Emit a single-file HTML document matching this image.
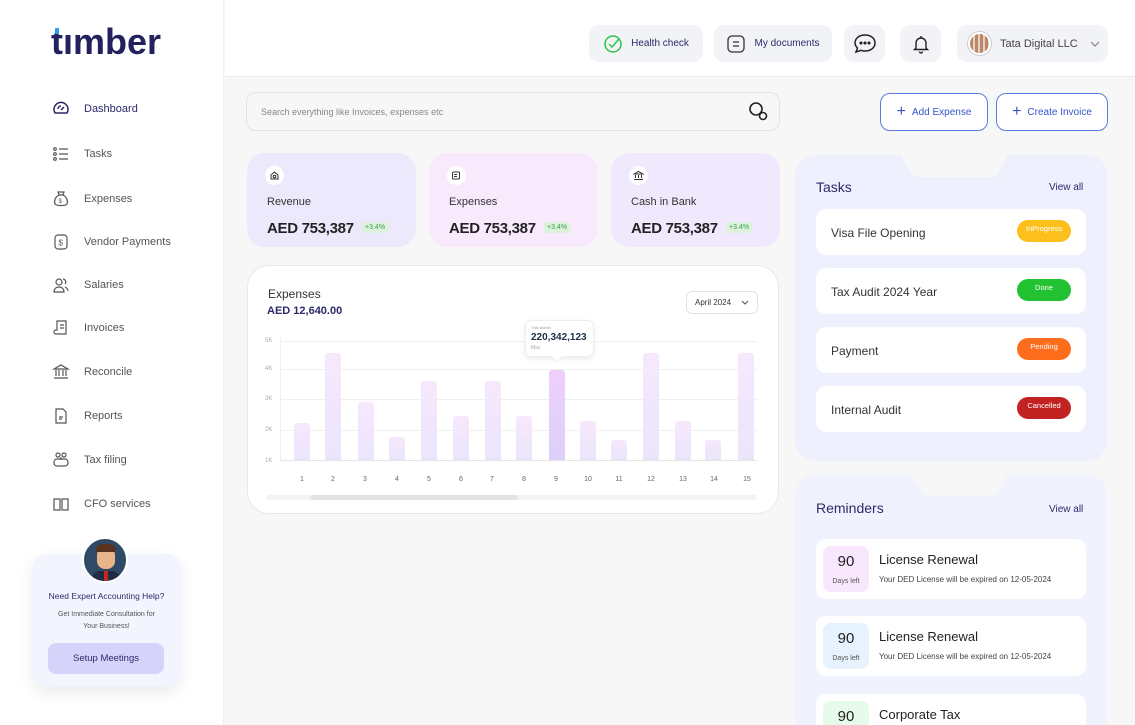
<!DOCTYPE html>
<html><head><meta charset="utf-8">
<style>
*{margin:0;padding:0;box-sizing:border-box}
html{width:1135px;height:725px;overflow:hidden}
body{width:1135px;height:725px;overflow:hidden;background:#f7f7f7;font-family:"Liberation Sans",sans-serif;position:relative;color:#222}
.abs{position:absolute}
.side{left:0;top:0;width:224px;height:725px;background:#fff;border-right:1px solid #eee}
.hdr{left:225px;top:0;width:910px;height:77px;background:#fff;border-bottom:1px solid #ececec}
.nav{position:absolute;left:52px;font-size:11px;color:#555;display:flex;align-items:center}
.nav svg{width:18px;height:18px;margin-right:14px}
.pill{position:absolute;top:25px;height:37px;background:#f2f3f7;border-radius:10px;display:flex;align-items:center;justify-content:center;font-size:10px;color:#2c2a6b}
.btn{position:absolute;top:93px;height:38px;border:1px solid #5b7be0;border-radius:10px;background:#fff;color:#3355cc;font-size:10px;display:flex;align-items:center;justify-content:center}
.card{position:absolute;top:153px;width:169px;height:94px;border-radius:18px}
.card .ic{position:absolute;left:18px;top:13px;width:19px;height:19px;border-radius:50%;background:#fff;display:flex;align-items:center;justify-content:center}
.card .t{position:absolute;left:20px;top:43px;font-size:11px;color:#333}
.card .v{position:absolute;left:20px;top:67px;font-size:15px;font-weight:bold;color:#222;letter-spacing:-0.3px}
.card .b{position:absolute;left:115px;top:69px;font-size:7px;color:#3a9a4a;background:#dcf2dc;padding:2px 3px;border-radius:2px}
.task{position:absolute;left:816px;width:270px;height:46px;background:#fff;border-radius:10px;font-size:12px;color:#333}
.task span{position:absolute;left:15px;top:17px}
.task i{position:absolute;right:15px;top:11px;width:54px;height:22px;border-radius:11px;color:#fff;font-style:normal;font-size:7.5px;text-align:center;line-height:18px}
.rem{position:absolute;left:816px;width:270px;height:60px;background:#fff;border-radius:10px}
.rem .d{position:absolute;left:7px;top:7px;width:46px;height:46px;border-radius:8px;text-align:center}
.rem .d b{display:block;font-size:15px;font-weight:normal;color:#222;margin-top:7px}
.rem .d small{font-size:7px;color:#555}
.rem .h{position:absolute;left:63px;top:13px;font-size:13px;color:#222}
.rem .s{position:absolute;left:63px;top:36px;font-size:8px;color:#444}
.bar{position:absolute;width:16px;border-radius:3px 3px 0 0;background:linear-gradient(#f6e8fd,#ebe5fb)}
.xl{position:absolute;top:476px;font-size:7px;color:#666;width:16px;text-align:center}
.yl{position:absolute;left:265px;font-size:6px;color:#aaa}
.gl{position:absolute;left:280px;width:477px;height:1px;background:#f0f0f0}
</style></head><body>
<div class="abs side"></div>
<div class="abs hdr"></div>
<div class="abs" style="left:51px;top:21px;font-size:36px;font-weight:bold;color:#23215e;letter-spacing:0px">tımber</div>
<div class="abs" style="left:55px;top:28px;width:4px;height:6px;background:#2a9bf0;border-radius:1px"></div>

<div class="nav" style="top:100px;color:#2c2a6b"><svg viewBox="0 0 18 18" fill="none" stroke="#2c2a6b" stroke-width="1.5"><path d="M3 13a7 7 0 1 1 12 0z"/><path d="M9 10l3-3M6 9a3 3 0 0 1 3-3"/></svg>Dashboard</div>
<div class="nav" style="top:145px"><svg viewBox="0 0 18 18" fill="none" stroke="#555" stroke-width="1.2"><circle cx="3" cy="4" r="1.3"/><circle cx="3" cy="9" r="1.3"/><circle cx="3" cy="14" r="1.3"/><path d="M7 4h9M7 9h9M7 14h9"/></svg>Tasks</div>
<div class="nav" style="top:190px"><svg viewBox="0 0 18 18" fill="none" stroke="#555" stroke-width="1.2"><path d="M6 2h6l-1 3H7zM7 5C3 7 2 11 3 14c1 2 11 2 12 0 1-3 0-7-4-9"/><text x="6.5" y="13" font-size="6" fill="#555" stroke="none">$</text></svg>Expenses</div>
<div class="nav" style="top:233px"><svg viewBox="0 0 18 18" fill="none" stroke="#555" stroke-width="1.2"><rect x="3" y="2" width="12" height="14" rx="3"/><text x="6.5" y="12.5" font-size="8" fill="#555" stroke="none">$</text></svg>Vendor Payments</div>
<div class="nav" style="top:276px"><svg viewBox="0 0 18 18" fill="none" stroke="#555" stroke-width="1.2"><circle cx="7" cy="6" r="3"/><path d="M2 16c0-3 2-5 5-5s5 2 5 5zM11 3a3 3 0 0 1 2 5M13 11c2 1 3 2 3 4"/></svg>Salaries</div>
<div class="nav" style="top:319px"><svg viewBox="0 0 18 18" fill="none" stroke="#555" stroke-width="1.2"><path d="M5 2h9v13H4a2 2 0 0 1 0-4h1z"/><path d="M8 6h4M8 9h4"/></svg>Invoices</div>
<div class="nav" style="top:363px"><svg viewBox="0 0 18 18" fill="none" stroke="#555" stroke-width="1.2"><path d="M2 6l7-4 7 4zM4 7v6M7 7v6M11 7v6M14 7v6M2 15h14"/></svg>Reconcile</div>
<div class="nav" style="top:407px"><svg viewBox="0 0 18 18" fill="none" stroke="#555" stroke-width="1.2"><path d="M4 2h7l3 3v11H4z"/><path d="M7 10h4M7 12h3"/></svg>Reports</div>
<div class="nav" style="top:451px"><svg viewBox="0 0 18 18" fill="none" stroke="#555" stroke-width="1.2"><rect x="2" y="8" width="14" height="7" rx="3"/><circle cx="6" cy="4" r="2"/><circle cx="12" cy="4" r="2"/><path d="M9 6v3"/></svg>Tax filing</div>
<div class="nav" style="top:495px"><svg viewBox="0 0 18 18" fill="none" stroke="#555" stroke-width="1.2"><path d="M2 4h6v11H2zM10 4h6v11h-6z"/></svg>CFO services</div>

<div class="abs" style="left:32px;top:554px;width:149px;height:133px;background:#f3f5fe;border-radius:14px;box-shadow:0 6px 16px rgba(0,0,0,0.08)"></div>
<div class="abs" style="left:82px;top:537px;width:46px;height:46px;border-radius:50%;background:#2e4a66;border:2px solid #fff;overflow:hidden"><div style="position:absolute;left:13px;top:8px;width:18px;height:22px;border-radius:8px;background:#e8b48a"></div><div style="position:absolute;left:12px;top:5px;width:20px;height:8px;border-radius:8px 8px 2px 2px;background:#5a3320"></div><div style="position:absolute;left:8px;top:32px;width:28px;height:14px;background:#1e2c44;border-radius:8px 8px 0 0"></div><div style="position:absolute;left:20px;top:32px;width:4px;height:12px;background:#c22"></div></div>
<div class="abs" style="left:32px;top:591px;width:149px;text-align:center;font-size:8.5px;color:#2c2a6b">Need Expert Accounting Help?</div>
<div class="abs" style="left:32px;top:609px;width:149px;text-align:center;font-size:7px;color:#555;line-height:12px">Get Immediate Consultation for<br>Your Business!</div>
<div class="abs" style="left:48px;top:643px;width:116px;height:31px;background:#d6d3fb;border-radius:8px;font-size:9.5px;color:#2c2a6b;text-align:center;line-height:31px">Setup Meetings</div>

<div class="pill" style="left:589px;width:114px"><svg width="20" height="20" viewBox="0 0 20 20" fill="none" stroke="#2ec44a" stroke-width="1.5" style="margin-right:8px"><circle cx="10" cy="10" r="8"/><path d="M6 10l3 3 7-8"/></svg>Health check</div>
<div class="pill" style="left:714px;width:118px"><svg width="20" height="20" viewBox="0 0 20 20" fill="none" stroke="#333" stroke-width="1.3" style="margin-right:8px"><rect x="2" y="2" width="16" height="16" rx="4"/><path d="M7 8h6M7 12h6"/></svg>My documents</div>
<div class="pill" style="left:844px;width:41px"><svg width="24" height="22" viewBox="0 0 24 22" fill="none" stroke="#222" stroke-width="1.5"><path d="M12 2c6 0 10 3.5 10 8s-4 8-10 8c-1.5 0-3-.3-4-.7L3 19l1.5-4C3 13.5 2 12 2 10c0-4.5 4-8 10-8z"/><circle cx="8" cy="10" r=".8" fill="#222"/><circle cx="12" cy="10" r=".8" fill="#222"/><circle cx="16" cy="10" r=".8" fill="#222"/></svg></div>
<div class="pill" style="left:900px;width:41px"><svg width="20" height="20" viewBox="0 0 20 20" fill="none" stroke="#222" stroke-width="1.4"><path d="M5 14V9a5 5 0 0 1 10 0v5l1.5 1.5h-13zM8.5 17.5a1.5 1.5 0 0 0 3 0M10 2v2"/></svg></div>
<div class="pill" style="left:957px;width:151px;justify-content:flex-start;padding-left:11px;color:#444;font-size:11px"><div style="width:23px;height:23px;border-radius:50%;background:repeating-linear-gradient(90deg,#b9886a 0 3px,#e4d2c2 3px 5px);border:2px solid #fff;margin-right:9px;box-shadow:0 0 0 1px #ccc"></div>Tata Digital LLC<svg width="10" height="8" viewBox="0 0 10 8" style="margin-left:12px"><path d="M1 2l4 4 4-4" fill="none" stroke="#777" stroke-width="1"/></svg></div>

<div class="abs" style="left:246px;top:92px;width:534px;height:39px;background:#f7f7f7;border:1px solid #e3e3e3;border-radius:10px"></div>
<div class="abs" style="left:261px;top:107px;font-size:9px;color:#888">Search everything like Invoices, expenses etc</div>
<svg class="abs" style="left:748px;top:101px" width="22" height="22" viewBox="0 0 22 22" fill="none" stroke="#222" stroke-width="1.6"><circle cx="8" cy="8" r="6"/><circle cx="15" cy="15" r="3.5"/></svg>
<div class="btn" style="left:880px;width:108px"><span style="font-size:16px;margin-right:6px">+</span>Add Expense</div>
<div class="btn" style="left:996px;width:112px"><span style="font-size:16px;margin-right:6px">+</span>Create Invoice</div>

<div class="card" style="left:247px;background:#ede9fd"><div class="ic"><svg width="11" height="11" viewBox="0 0 11 11" fill="none" stroke="#333" stroke-width="1"><path d="M2 5l3.5-3 3.5 3v4H2z"/><circle cx="5.5" cy="6.5" r="1.3"/></svg></div><div class="t">Revenue</div><div class="v">AED 753,387</div><div class="b">+3.4%</div></div>
<div class="card" style="left:429px;background:#f9e9fd"><div class="ic"><svg width="11" height="11" viewBox="0 0 11 11" fill="none" stroke="#333" stroke-width="1"><rect x="1.5" y="2" width="7" height="7" rx="1"/><path d="M3 4.5h3M3 6.5h3"/></svg></div><div class="t">Expenses</div><div class="v">AED 753,387</div><div class="b">+3.4%</div></div>
<div class="card" style="left:611px;background:#f0e9fd"><div class="ic"><svg width="11" height="11" viewBox="0 0 11 11" fill="none" stroke="#333" stroke-width="1"><path d="M1 4l4.5-2.5L10 4zM2.5 5v3M5.5 5v3M8.5 5v3M1 9.5h9"/></svg></div><div class="t">Cash in Bank</div><div class="v">AED 753,387</div><div class="b">+3.4%</div></div>

<div class="abs" style="left:247px;top:265px;width:532px;height:249px;background:#fff;border:1px solid #e8e8e8;border-radius:22px"></div>
<div class="abs" style="left:268px;top:287px;font-size:12px;color:#333">Expenses</div>
<div class="abs" style="left:267px;top:305px;font-size:11px;font-weight:bold;color:#2c2a6b">AED 12,640.00</div>
<div class="abs" style="left:686px;top:291px;width:72px;height:23px;border:1px solid #e3e3e3;border-radius:6px;font-size:8px;color:#333;line-height:21px;padding-left:8px">April 2024<svg width="8" height="6" viewBox="0 0 8 6" style="position:absolute;right:8px;top:8px"><path d="M1 1l3 3 3-3" fill="none" stroke="#555"/></svg></div>
<div class="abs" style="left:280px;top:338px;width:1px;height:123px;background:#eee"></div>
<div class="gl" style="top:341px"></div><div class="gl" style="top:369px"></div><div class="gl" style="top:399px"></div><div class="gl" style="top:430px"></div><div class="gl" style="top:460px;background:#e6e6e6"></div>
<div class="yl" style="top:338px">5K</div><div class="yl" style="top:366px">4K</div><div class="yl" style="top:396px">3K</div><div class="yl" style="top:427px">2K</div><div class="yl" style="top:458px">1K</div>
<div class="bar" style="left:294px;top:423px;height:37px"></div>
<div class="bar" style="left:325px;top:353px;height:107px"></div>
<div class="bar" style="left:358px;top:402px;height:58px"></div>
<div class="bar" style="left:389px;top:437px;height:23px"></div>
<div class="bar" style="left:421px;top:381px;height:79px"></div>
<div class="bar" style="left:453px;top:416px;height:44px"></div>
<div class="bar" style="left:485px;top:381px;height:79px"></div>
<div class="bar" style="left:516px;top:416px;height:44px"></div>
<div class="bar" style="left:549px;top:370px;height:90px;background:linear-gradient(#edd0fb,#dcd0fa)"></div>
<div class="bar" style="left:580px;top:421px;height:39px"></div>
<div class="bar" style="left:611px;top:440px;height:20px"></div>
<div class="bar" style="left:643px;top:353px;height:107px"></div>
<div class="bar" style="left:675px;top:421px;height:39px"></div>
<div class="bar" style="left:705px;top:440px;height:20px"></div>
<div class="bar" style="left:738px;top:353px;height:107px"></div>
<div class="xl" style="left:294px">1</div><div class="xl" style="left:325px">2</div><div class="xl" style="left:357px">3</div><div class="xl" style="left:389px">4</div><div class="xl" style="left:421px">5</div><div class="xl" style="left:453px">6</div><div class="xl" style="left:484px">7</div><div class="xl" style="left:516px">8</div><div class="xl" style="left:548px">9</div><div class="xl" style="left:580px">10</div><div class="xl" style="left:611px">11</div><div class="xl" style="left:643px">12</div><div class="xl" style="left:675px">13</div><div class="xl" style="left:706px">14</div><div class="xl" style="left:739px">15</div>
<div class="abs" style="left:266px;top:495px;width:491px;height:5px;background:#f3f3f3;border-radius:3px"></div>
<div class="abs" style="left:310px;top:495px;width:208px;height:5px;background:#e3e3e3;border-radius:3px"></div>
<div class="abs" style="left:525px;top:320px;width:69px;height:37px;background:#fff;border:1px solid #eee;border-radius:6px;box-shadow:0 2px 6px rgba(0,0,0,0.08)"></div>
<div class="abs" style="left:553px;top:353px;width:8px;height:8px;background:#fff;transform:rotate(45deg);border-right:1px solid #eee;border-bottom:1px solid #eee"></div>
<div class="abs" style="left:531px;top:325px;font-size:4px;color:#999">This Month</div>
<div class="abs" style="left:531px;top:332px;font-size:10px;font-weight:bold;color:#22304a">220,342,123</div>
<div class="abs" style="left:531px;top:345px;font-size:5px;color:#aaa">May</div>

<svg class="abs" style="left:795px;top:155px" width="313" height="306"><path d="M0 22Q0 0 22 0H105L117 18Q120 22 126 22H195Q201 22 203 18L213 0H290Q312 0 312 22V284Q312 306 290 306H22Q0 306 0 284Z" fill="#eef0fe"/></svg>
<div class="abs" style="left:816px;top:179px;font-size:14px;color:#2c2a6b">Tasks</div>
<div class="abs" style="left:1049px;top:182px;font-size:10px;color:#2c2a6b">View all</div>
<div class="task" style="top:209px"><span>Visa File Opening</span><i style="background:#fcbf1c">InProgress</i></div>
<div class="task" style="top:268px"><span>Tax Audit 2024 Year</span><i style="background:#22c232">Done</i></div>
<div class="task" style="top:327px"><span>Payment</span><i style="background:#fd6d1c">Pending</i></div>
<div class="task" style="top:386px"><span>Internal Audit</span><i style="background:#c22222">Cancelled</i></div>

<svg class="abs" style="left:795px;top:475px" width="313" height="260"><path d="M0 22Q0 0 22 0H115L125 16Q129 21 135 21H195Q201 21 204 16L212 0H290Q312 0 312 22V260H0Z" fill="#f0f3fe"/></svg>
<div class="abs" style="left:816px;top:500px;font-size:14px;color:#2c2a6b">Reminders</div>
<div class="abs" style="left:1049px;top:504px;font-size:10px;color:#2c2a6b">View all</div>
<div class="rem" style="top:539px"><div class="d" style="background:#f9e8fd"><b>90</b><small>Days left</small></div><div class="h">License Renewal</div><div class="s">Your DED License will be expired on 12-05-2024</div></div>
<div class="rem" style="top:616px"><div class="d" style="background:#e6f2fd"><b>90</b><small>Days left</small></div><div class="h">License Renewal</div><div class="s">Your DED License will be expired on 12-05-2024</div></div>
<div class="rem" style="top:694px"><div class="d" style="background:#e6fbe9"><b>90</b><small>Days left</small></div><div class="h">Corporate Tax</div></div>
</body></html>
